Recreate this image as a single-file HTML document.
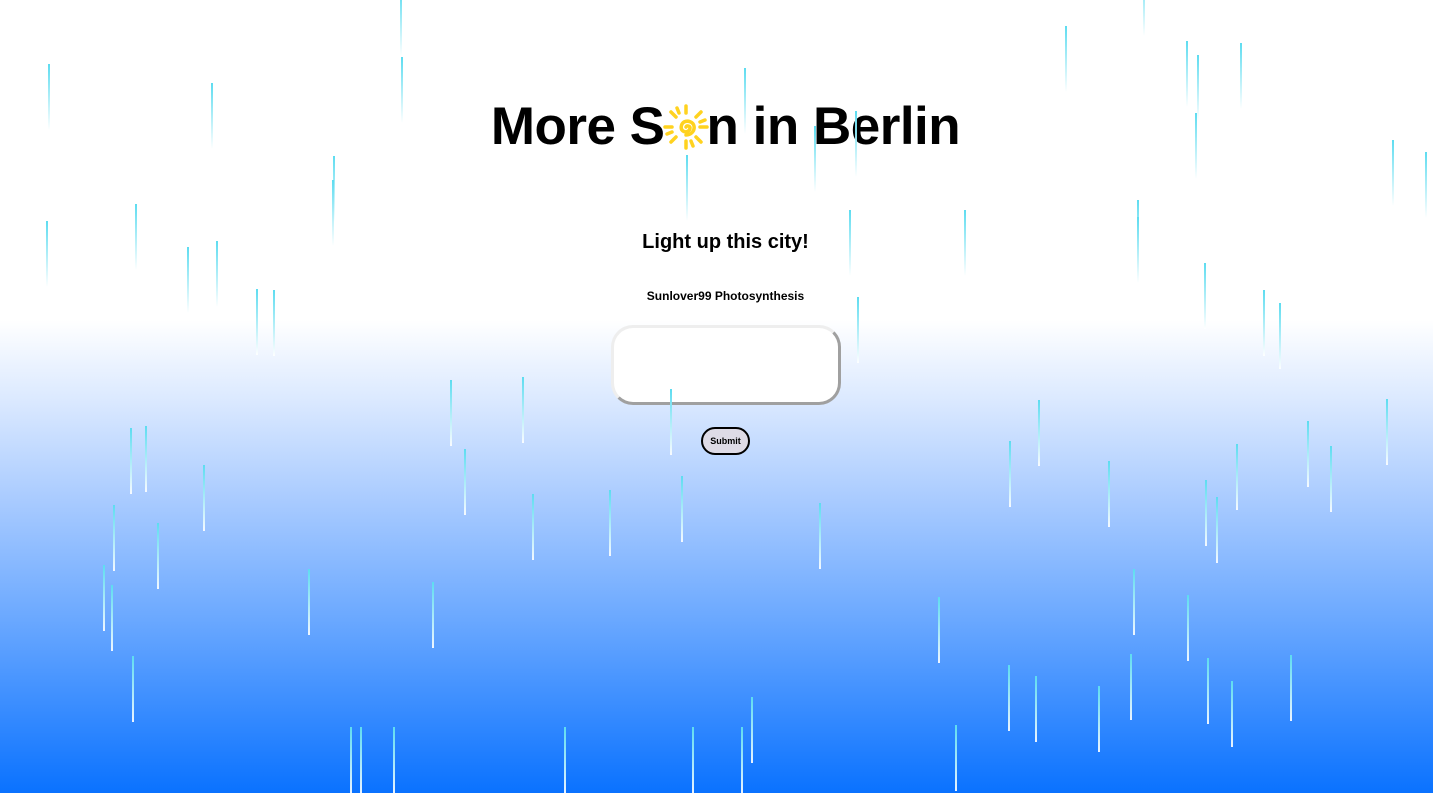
<!DOCTYPE html>
<html><head><meta charset="utf-8"><style>
html,body{margin:0;padding:0;width:1433px;height:793px;overflow:hidden}
body{position:relative;font-family:"Liberation Sans",Arial,sans-serif;
background:linear-gradient(to bottom,#fff 0px,#fff 320px,#dbe9ff 400px,#a9cbff 500px,#6aa8ff 620px,#0a72ff 793px);}
.d{position:absolute;width:2px;height:66px;background:linear-gradient(to bottom,#5ddcf0,rgba(255,255,255,0.9));}
h1{position:absolute;left:18px;right:0;top:96px;margin:0;text-align:center;font-size:53px;font-weight:bold;color:#000;letter-spacing:-0.5px;white-space:nowrap}
h1 svg{display:inline-block;vertical-align:-7px;margin:0 -3px}
.t{position:absolute;left:18px;right:0;text-align:center;font-weight:bold;color:#000}
.ta{position:absolute;left:611px;top:325px;width:224px;height:74px;border-radius:22px;background:#fff;border:3px solid #eee;border-right-color:#a0a0a0;border-bottom-color:#a0a0a0}
.btn{position:absolute;left:701px;top:427px;width:45px;height:24px;border:2px solid #000;border-radius:14px;background:#dedbe6;font-size:9px;font-weight:bold;text-align:center;line-height:24px}
</style></head><body>
<h1>More S<svg width="48" height="48" viewBox="0 0 48 48"><g stroke="#ffd21f" stroke-width="3.5" stroke-linecap="round" fill="none"><path d="M24 3v7M24 38v7M3 24h7M38 24h7M9 9l5 5M34 34l5 5M9 39l5-5M34 14l5-5M15 5l2 5M31 43l-2-5M5 31l5-2M43 17l-5 2"/><path d="M24 24c1-2 4-1 4 1 0 3-4 5-7 3-3-2-2-7 1-9 4-2 9 0 10 4 1 5-3 9-8 9"/></g></svg>n in Berlin</h1>
<div class="t" style="top:231px;font-size:20px">Light up this city!</div>
<div class="t" style="top:289px;font-size:12px">Sunlover99 Photosynthesis</div>
<div class="ta"></div>
<div class="btn">Submit</div>
<div class="d" style="left:48px;top:64px"></div><div class="d" style="left:211px;top:83px"></div><div class="d" style="left:400px;top:-10px"></div><div class="d" style="left:401px;top:57px"></div><div class="d" style="left:333px;top:156px"></div><div class="d" style="left:332px;top:180px"></div><div class="d" style="left:135px;top:204px"></div><div class="d" style="left:46px;top:221px"></div><div class="d" style="left:187px;top:247px"></div><div class="d" style="left:216px;top:241px"></div><div class="d" style="left:256px;top:289px"></div><div class="d" style="left:273px;top:290px"></div><div class="d" style="left:744px;top:68px"></div><div class="d" style="left:686px;top:155px"></div><div class="d" style="left:814px;top:126px"></div><div class="d" style="left:855px;top:111px"></div><div class="d" style="left:849px;top:210px"></div><div class="d" style="left:964px;top:210px"></div><div class="d" style="left:857px;top:297px"></div><div class="d" style="left:1065px;top:26px"></div><div class="d" style="left:1143px;top:-30px"></div><div class="d" style="left:1186px;top:41px"></div><div class="d" style="left:1197px;top:55px"></div><div class="d" style="left:1240px;top:43px"></div><div class="d" style="left:1195px;top:113px"></div><div class="d" style="left:1392px;top:140px"></div><div class="d" style="left:1425px;top:152px"></div><div class="d" style="left:1137px;top:200px"></div><div class="d" style="left:1137px;top:217px"></div><div class="d" style="left:1204px;top:263px"></div><div class="d" style="left:1263px;top:290px"></div><div class="d" style="left:1279px;top:303px"></div><div class="d" style="left:450px;top:380px"></div><div class="d" style="left:522px;top:377px"></div><div class="d" style="left:670px;top:389px"></div><div class="d" style="left:130px;top:428px"></div><div class="d" style="left:145px;top:426px"></div><div class="d" style="left:464px;top:449px"></div><div class="d" style="left:203px;top:465px"></div><div class="d" style="left:113px;top:505px"></div><div class="d" style="left:157px;top:523px"></div><div class="d" style="left:103px;top:565px"></div><div class="d" style="left:111px;top:585px"></div><div class="d" style="left:532px;top:494px"></div><div class="d" style="left:609px;top:490px"></div><div class="d" style="left:681px;top:476px"></div><div class="d" style="left:819px;top:503px"></div><div class="d" style="left:1009px;top:441px"></div><div class="d" style="left:1038px;top:400px"></div><div class="d" style="left:1108px;top:461px"></div><div class="d" style="left:1205px;top:480px"></div><div class="d" style="left:1216px;top:497px"></div><div class="d" style="left:1236px;top:444px"></div><div class="d" style="left:1307px;top:421px"></div><div class="d" style="left:1330px;top:446px"></div><div class="d" style="left:1386px;top:399px"></div><div class="d" style="left:308px;top:569px"></div><div class="d" style="left:432px;top:582px"></div><div class="d" style="left:132px;top:656px"></div><div class="d" style="left:938px;top:597px"></div><div class="d" style="left:1133px;top:569px"></div><div class="d" style="left:1187px;top:595px"></div><div class="d" style="left:1008px;top:665px"></div><div class="d" style="left:1035px;top:676px"></div><div class="d" style="left:1098px;top:686px"></div><div class="d" style="left:1130px;top:654px"></div><div class="d" style="left:1207px;top:658px"></div><div class="d" style="left:1231px;top:681px"></div><div class="d" style="left:1290px;top:655px"></div><div class="d" style="left:751px;top:697px"></div><div class="d" style="left:955px;top:725px"></div><div class="d" style="left:741px;top:727px"></div><div class="d" style="left:350px;top:727px"></div><div class="d" style="left:360px;top:727px"></div><div class="d" style="left:393px;top:727px"></div><div class="d" style="left:564px;top:727px"></div><div class="d" style="left:692px;top:727px"></div>
</body></html>
